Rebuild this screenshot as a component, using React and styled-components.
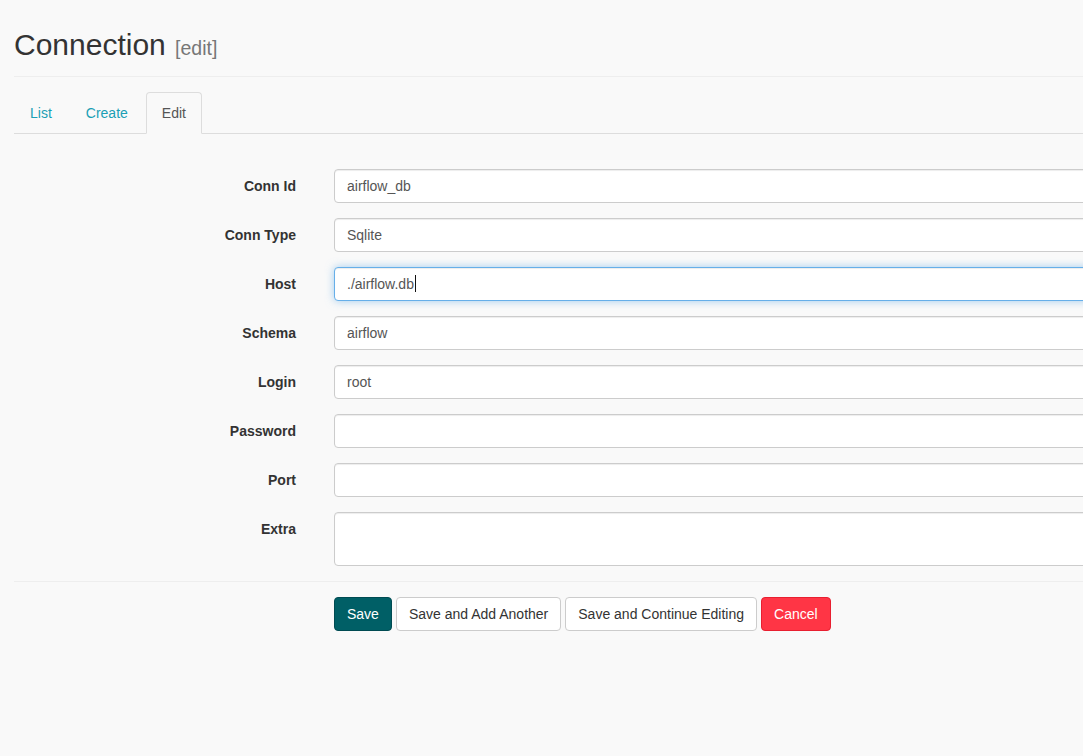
import React from "react";
import styled, { createGlobalStyle } from "styled-components";

const GlobalStyle = createGlobalStyle`
  html, body {
    margin: 0;
    padding: 0;
    background: #f9f9f9;
    overflow: hidden;
  }
  body {
    font-family: "Liberation Sans", Arial, Helvetica, sans-serif;
    font-size: 14px;
    line-height: 20px;
    color: #333;
  }
`;

const Page = styled.div`
  width: 1240px;
  padding: 0 0 0 14px;
  box-sizing: border-box;
`;

const Header = styled.div`
  padding: 28px 0 15px;
  border-bottom: 1px solid #eee;
`;

const Title = styled.h2`
  margin: 0;
  font-size: 30px;
  line-height: 33px;
  font-weight: 400;
  color: #333;

  small {
    font-size: 19.5px;
    line-height: 1;
    color: #777;
    margin-left: 1px;
  }
`;

const Tabs = styled.ul`
  display: flex;
  list-style: none;
  margin: 15px 0 0;
  padding: 0;
  border-bottom: 1px solid #ddd;
`;

const Tab = styled.li`
  margin-right: 2px;
  margin-bottom: -1px;
`;

const TabLink = styled.a`
  display: block;
  padding: 10px 15px;
  line-height: 20px;
  border: 1px solid ${(p) => (p.$active ? "#ddd" : "transparent")};
  border-bottom-color: ${(p) => (p.$active ? "#f9f9f9" : "transparent")};
  border-radius: 4px 4px 0 0;
  background: ${(p) => (p.$active ? "#f9f9f9" : "transparent")};
  color: ${(p) => (p.$active ? "#555" : "#1a9fb5")};
  text-decoration: none;
  cursor: pointer;
`;

const Form = styled.form`
  margin-top: 35px;
`;

const Row = styled.div`
  display: grid;
  grid-template-columns: 282px 1fr;
  column-gap: 38px;
  margin-bottom: 15px;
`;

const Label = styled.label`
  text-align: right;
  font-weight: 700;
  padding-top: 7px;
  line-height: 20px;
`;

const fieldBase = `
  display: block;
  width: 100%;
  box-sizing: border-box;
  height: 34px;
  padding: 6px 12px;
  font-family: "Liberation Sans", Arial, Helvetica, sans-serif;
  font-size: 14px;
  line-height: 20px;
  color: #555;
  background: #fff;
  border: 1px solid #ccc;
  border-radius: 4px;
  box-shadow: inset 0 1px 1px rgba(0, 0, 0, 0.075);
  outline: none;
`;

const Input = styled.input`
  ${fieldBase}
`;

const FocusedField = styled.div`
  ${fieldBase}
  border-color: #66afe9;
  box-shadow: inset 0 1px 1px rgba(0, 0, 0, 0.075),
    0 0 8px rgba(102, 175, 233, 0.6);
`;

const Caret = styled.span`
  display: inline-block;
  width: 1px;
  height: 17px;
  margin-left: 1px;
  vertical-align: -3px;
  background: #111;
`;

const TextArea = styled.textarea`
  ${fieldBase}
  height: 54px;
  resize: vertical;
`;

const Divider = styled.hr`
  margin: 15px 0;
  border: 0;
  border-top: 1px solid #eee;
`;

const Actions = styled.div`
  display: flex;
  gap: 4px;
  padding-left: 320px;
`;

const variants = {
  primary: { bg: "#005f66", border: "#004b52", color: "#fff" },
  default: { bg: "#fff", border: "#ccc", color: "#333" },
  danger: { bg: "#ff3545", border: "#e81f30", color: "#fff" },
};

const Button = styled.button`
  padding: 6px 12px;
  font-family: "Liberation Sans", Arial, Helvetica, sans-serif;
  font-size: 14px;
  line-height: 20px;
  border-radius: 4px;
  border: 1px solid ${(p) => variants[p.$variant].border};
  background: ${(p) => variants[p.$variant].bg};
  color: ${(p) => variants[p.$variant].color};
  cursor: pointer;
`;

const fields = [
  { label: "Conn Id", value: "airflow_db" },
  { label: "Conn Type", value: "Sqlite" },
  { label: "Host", value: "./airflow.db", focused: true },
  { label: "Schema", value: "airflow" },
  { label: "Login", value: "root" },
  { label: "Password", value: "", type: "password" },
  { label: "Port", value: "" },
];

export default function App() {
  return (
    <>
      <GlobalStyle />
      <Page>
        <Header>
          <Title>
            Connection <small>[edit]</small>
          </Title>
        </Header>

        <Tabs>
          <Tab>
            <TabLink>List</TabLink>
          </Tab>
          <Tab>
            <TabLink>Create</TabLink>
          </Tab>
          <Tab>
            <TabLink $active>Edit</TabLink>
          </Tab>
        </Tabs>

        <Form onSubmit={(e) => e.preventDefault()}>
          {fields.map((f) => (
            <Row key={f.label}>
              <Label>{f.label}</Label>
              {f.focused ? (
                <FocusedField>
                  {f.value}
                  <Caret />
                </FocusedField>
              ) : (
                <Input type={f.type || "text"} defaultValue={f.value} />
              )}
            </Row>
          ))}
          <Row>
            <Label>Extra</Label>
            <TextArea defaultValue="" />
          </Row>

          <Divider />

          <Actions>
            <Button $variant="primary">Save</Button>
            <Button $variant="default">Save and Add Another</Button>
            <Button $variant="default">Save and Continue Editing</Button>
            <Button $variant="danger">Cancel</Button>
          </Actions>
        </Form>
      </Page>
    </>
  );
}
